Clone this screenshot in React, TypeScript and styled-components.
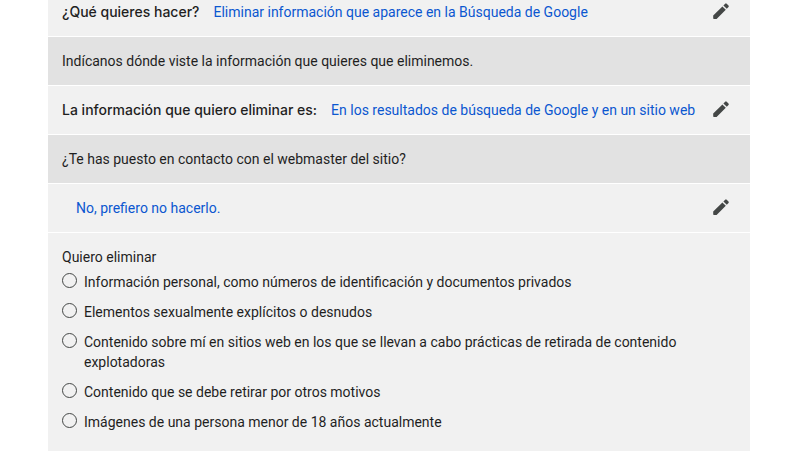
import React, { useState } from "react";
import styled, { createGlobalStyle } from "styled-components";

const GlobalStyle = createGlobalStyle`
  * { box-sizing: border-box; }
  body {
    margin: 0;
    background: #fff;
    color: #1f1f1f;
    font: 14px/20px Roboto, "Noto Sans", sans-serif;
    overflow: hidden;
  }
`;

const Page = styled.main`
  display: flex;
  flex-direction: column;
  gap: 1px;
  margin: -12px 44px 0 48px;
`;

const Row = styled.div<{ $dark?: boolean; $indent?: boolean }>`
  display: flex;
  align-items: center;
  gap: 14px;
  min-height: 48px;
  padding: 0 20px 0 ${(p) => (p.$indent ? 28 : 14)}px;
  background: ${(p) => (p.$dark ? "#e2e2e2" : "#f1f1f1")};
`;

const Label = styled.span`
  font-family: Inter, Roboto, sans-serif;
  font-weight: 500;
`;

const Answer = styled.a`
  color: #0b57d0;
  text-decoration: none;
  white-space: nowrap;
`;

const EditButton = styled.button`
  display: flex;
  margin-left: auto;
  padding: 0 0 2px;
  border: 0;
  background: none;
  color: #444746;
  cursor: pointer;
`;

const Options = styled.fieldset`
  margin: 0;
  padding: 14px 14px 19px;
  border: 0;
  background: #f1f1f1;
`;

const Legend = styled.legend`
  float: left;
  width: 100%;
  padding: 0;
  margin-bottom: 5px;
`;

const Option = styled.label`
  clear: both;
  display: flex;
  align-items: flex-start;
  gap: 7px;
  margin-bottom: 10px;
  &:last-child { margin-bottom: 0; }
`;

const Radio = styled.input`
  appearance: none;
  flex: none;
  width: 15px;
  height: 15px;
  margin: 1px 0 0;
  border: 1px solid #444746;
  border-radius: 50%;
  &:checked { border: 5px solid #0b57d0; }
`;

const Edit = () => (
  <EditButton type="button" aria-label="Editar">
    <svg width="18" height="18" viewBox="0 0 18 18" fill="currentColor" aria-hidden="true">
      <path d="M1.2 13.6 10.4 4.4 13.8 7.8 4.6 17H1.9a.7.7 0 0 1-.7-.7ZM11.4 3.4 13.2 1.7a1.1 1.1 0 0 1 1.5 0L16.5 3.5a1.1 1.1 0 0 1 0 1.5L14.8 6.8Z" />
    </svg>
  </EditButton>
);

const options = [
  "Información personal, como números de identificación y documentos privados",
  "Elementos sexualmente explícitos o desnudos",
  "Contenido sobre mí en sitios web en los que se llevan a cabo prácticas de retirada de contenido explotadoras",
  "Contenido que se debe retirar por otros motivos",
  "Imágenes de una persona menor de 18 años actualmente",
];

export default function App() {
  const [selected, setSelected] = useState("");
  return (
    <>
      <GlobalStyle />
      <Page>
        <Row>
          <Label>¿Qué quieres hacer?</Label>
          <Answer href="#">Eliminar información que aparece en la Búsqueda de Google</Answer>
          <Edit />
        </Row>
        <Row $dark>Indícanos dónde viste la información que quieres que eliminemos.</Row>
        <Row>
          <Label>La información que quiero eliminar es:</Label>
          <Answer href="#">En los resultados de búsqueda de Google y en un sitio web</Answer>
          <Edit />
        </Row>
        <Row $dark>¿Te has puesto en contacto con el webmaster del sitio?</Row>
        <Row $indent>
          <Answer href="#">No, prefiero no hacerlo.</Answer>
          <Edit />
        </Row>
        <Options>
          <Legend>Quiero eliminar</Legend>
          {options.map((text) => (
            <Option key={text}>
              <Radio type="radio" name="motivo" checked={selected === text} onChange={() => setSelected(text)} />
              <span>{text}</span>
            </Option>
          ))}
        </Options>
      </Page>
    </>
  );
}
